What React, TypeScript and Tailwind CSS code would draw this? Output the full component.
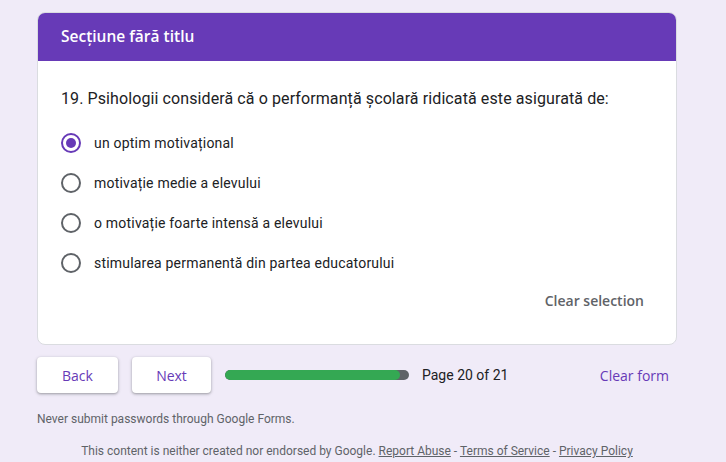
import { useState } from "react";

const OPTIONS = [
  "un optim motivațional",
  "motivație medie a elevului",
  "o motivație foarte intensă a elevului",
  "stimularea permanentă din partea educatorului",
];

const sans = "font-['Roboto','Liberation_Sans',sans-serif]";
const gsans = "font-['Open_Sans','Roboto',sans-serif]";

export default function App() {
  const [selected, setSelected] = useState<number | null>(0);

  return (
    <div className={`min-h-screen w-full bg-[#f0ebf8] pt-[12px] ${sans}`}>
      <div className="ml-[37px] w-[640px]">
        <div className="overflow-hidden rounded-lg border border-[#dadce0] bg-white">
          <div className={`flex h-[48px] items-center bg-[#673ab7] px-[23px] text-[15.5px] font-semibold text-white ${gsans}`}>
            Secțiune fără titlu
          </div>
          <div className="px-[23px] pb-[33px] pt-[26px]">
            <p className="text-[16px] leading-6 tracking-[0.1px] text-[#202124]">
              19. Psihologii consideră că o performanță școlară ridicată este asigurată de:
            </p>
            <div className="mt-[12px] flex flex-col">
              {OPTIONS.map((opt, i) => {
                const on = selected === i;
                return (
                  <button
                    key={opt}
                    type="button"
                    onClick={() => setSelected(i)}
                    className="flex h-[40px] items-center gap-[13px] text-left"
                  >
                    <span
                      className={`flex h-[20px] w-[20px] items-center justify-center rounded-full border-2 ${
                        on ? "border-[#673ab7]" : "border-[#5f6368]"
                      }`}
                    >
                      {on ? <span className="h-[10px] w-[10px] rounded-full bg-[#673ab7]" /> : null}
                    </span>
                    <span className="text-[14px] tracking-[0.2px] text-[#202124]">{opt}</span>
                  </button>
                );
              })}
            </div>
            <div className="mt-[7px] flex justify-end">
              <button
                type="button"
                onClick={() => setSelected(null)}
                className={`pr-[9px] text-[14px] font-semibold text-[#5f6368] ${gsans}`}
              >
                Clear selection
              </button>
            </div>
          </div>
        </div>

        <div className="mt-[12px] flex items-center">
          <button
            type="button"
            className={`h-[36px] w-[81px] rounded bg-white text-[14px] font-medium text-[#673ab7] shadow-[0_1px_2px_rgba(60,64,67,0.3),0_1px_3px_1px_rgba(60,64,67,0.15)] ${gsans}`}
          >
            Back
          </button>
          <button
            type="button"
            className={`ml-[14px] h-[36px] w-[79px] rounded bg-white text-[14px] font-medium text-[#673ab7] shadow-[0_1px_2px_rgba(60,64,67,0.3),0_1px_3px_1px_rgba(60,64,67,0.15)] ${gsans}`}
          >
            Next
          </button>
          <div className="ml-[14px] flex h-[10px] w-[184px] overflow-hidden rounded-full bg-[#5f6368]">
            <div className="h-full w-[175px] rounded-full bg-[#34a853]" />
          </div>
          <span className="ml-[13px] text-[14px] text-[#202124]">Page 20 of 21</span>
          <button
            type="button"
            className={`ml-auto mr-[8px] text-[14px] font-medium text-[#673ab7] ${gsans}`}
          >
            Clear form
          </button>
        </div>

        <p className="mt-[17px] text-[12px] text-[#5f6368]">Never submit passwords through Google Forms.</p>
        <p className="mt-[14px] text-center text-[12px] text-[#5f6368]">
          This content is neither created nor endorsed by Google.{" "}
          <a className="underline">Report Abuse</a> - <a className="underline">Terms of Service</a> -{" "}
          <a className="underline">Privacy Policy</a>
        </p>
      </div>
    </div>
  );
}
